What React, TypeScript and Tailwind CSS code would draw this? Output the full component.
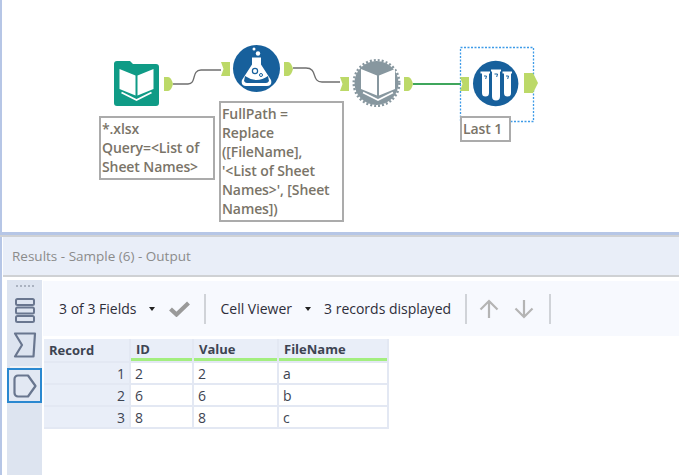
import React from 'react';

const rows = [
  { record: 1, id: '2', value: '2', fileName: 'a' },
  { record: 2, id: '6', value: '6', fileName: 'b' },
  { record: 3, id: '8', value: '8', fileName: 'c' },
];

const GREEN = '#bcd968';

function OutAnchor({ x, y, w = 9, h = 14 }: { x: number; y: number; w?: number; h?: number }) {
  return (
    <path
      d={`M${x} ${y}h${w * 0.45}q${w * 0.35} 0 ${w * 0.55} ${h / 2}q${-w * 0.2} ${h / 2} ${-w * 0.55} ${h / 2}h${-w * 0.45}z`}
      fill={GREEN}
    />
  );
}

function InAnchor({ x, y }: { x: number; y: number }) {
  return <path d={`M${x} ${y}h9v14h-9l2.5 -7z`} fill={GREEN} />;
}

function BookGlyph({ cx, cy }: { cx: number; cy: number }) {
  return (
    <g transform={`translate(${cx} ${cy})`} fill="none">
      <path d="M-1 -8.5 L-17 -15 V5 L-1 11.5z M1 -8.5 L17 -15 V5 L1 11.5z" fill="#fff" />
      <path d="M-15 8.5 L0 16 L15 8.5" stroke="#fff" strokeWidth="1.8" />
    </g>
  );
}

function Diagram() {
  return (
    <svg className="absolute left-0 top-0" width="679" height="232" viewBox="0 0 679 232">
      {/* wires */}
      <path d="M173 84H188C197 84 191 70 201 70H221" fill="none" stroke="#6f6f6f" strokeWidth="1.3" />
      <path d="M293 68H306C318 68 311 82 322 82H340" fill="none" stroke="#6f6f6f" strokeWidth="1.3" />
      <path d="M413 84H461" fill="none" stroke="#3fa65c" strokeWidth="2" />

      {/* input tool */}
      <path
        d="M114 64a3 3 0 0 1 3 -3H130l3 3H156a3 3 0 0 1 3 3V103a3 3 0 0 1 -3 3H117a3 3 0 0 1 -3 -3z"
        fill="#0f9b86"
      />
      <BookGlyph cx={136.5} cy={84} />
      <OutAnchor x={164} y={77} />

      {/* formula tool */}
      <InAnchor x={221} y={62} />
      <circle cx="256.5" cy="68.5" r="23.5" fill="#17609c" />
      <path d="M252 57.5h9v7l10 15.5q1.5 5.5 -4 6h-21q-5.5 -.5 -4 -6l10 -15.5z" fill="#fff" />
      <path d="M245 76q11.5 8 23 0l1 5q-1 2 -3 2h-19q-2 0 -3 -2z" fill="#17609c" />
      <circle cx="255" cy="71" r="2.6" fill="none" stroke="#17609c" strokeWidth="1.2" />
      <circle cx="261" cy="75" r="1.5" fill="none" stroke="#17609c" strokeWidth="1" />
      <circle cx="254" cy="49" r="1.5" fill="#fff" />
      <circle cx="258" cy="53.5" r="2.2" fill="#fff" />
      <OutAnchor x={284} y={62} />

      {/* dynamic input macro */}
      <InAnchor x={340} y={77} />
      <circle cx="376.5" cy="83" r="22" fill="#87979f" />
      <circle cx="376.5" cy="83" r="22.8" fill="none" stroke="#87979f" strokeWidth="2.4" strokeDasharray="2 2" />
      <BookGlyph cx={378} cy={84} />
      <OutAnchor x={404} y={77} />

      {/* sample tool */}
      <rect x="460.5" y="47.5" width="73" height="74" fill="none" stroke="#3e9be8" strokeWidth="1.3" strokeDasharray="2 1.5" />
      <InAnchor x={460} y={77} />
      <circle cx="495.7" cy="83.5" r="22.7" fill="#17609c" />
      <g fill="#fff">
        <path d="M480.5 71.5h9.5v2h-1v19.5a3.2 3.2 0 0 1 -7 0V73.5h-1.5z" />
        <path d="M491 69.5h10v2h-1v25a4 4 0 0 1 -8 0V71.5h-1z" />
        <path d="M502.5 71.5h9.5v2h-1v19.5a3.2 3.2 0 0 1 -7 0V73.5h-1.5z" />
      </g>
      <g stroke="#17609c" strokeWidth="1" fill="none">
        <path d="M484 76h2.5l-.8 3" />
        <path d="M494.5 74h3l-.8 3" />
        <path d="M506 76h2.5l-.8 3" />
      </g>
      <path d="M524 73h9l5 10l-5 10h-9z" fill={GREEN} />
    </svg>
  );
}

function Note({ className, children }: { className: string; children: React.ReactNode }) {
  return (
    <div
      className={`absolute border-2 border-[#ababab] bg-white px-[1px] pt-[1px] text-[14px] font-semibold leading-[19px] tracking-[-0.1px] whitespace-nowrap text-[#7a7468] ${className}`}
    >
      {children}
    </div>
  );
}

function Caret() {
  return <span className="h-0 w-0 border-x-[3.5px] border-t-[4px] border-x-transparent border-t-[#222]" />;
}

function Divider() {
  return <div className="h-[30px] w-[2px] bg-[#d0d3d8]" />;
}

function Sidebar() {
  return (
    <div className="flex w-[35px] shrink-0 flex-col items-center bg-[#dde4f0] pt-[5px]">
      <div className="flex gap-[2px]">
        {[0, 1, 2, 3, 4].map((i) => (
          <span key={i} className="h-[2px] w-[2px] bg-[#aab2c0]" />
        ))}
      </div>
      <svg className="mt-[11px]" width="22" height="25" viewBox="0 0 22 25" fill="none" stroke="#69768f" strokeWidth="2">
        <rect x="2" y="1" width="18" height="6" rx="1.5" />
        <rect x="2" y="9.5" width="18" height="6" rx="1.5" />
        <rect x="2" y="18" width="18" height="6" rx="1.5" />
      </svg>
      <svg className="mt-[9px]" width="24" height="26" viewBox="0 0 24 26" fill="none" stroke="#69768f" strokeWidth="2.2" strokeLinejoin="round">
        <path d="M2 1.5H22L20.5 24.5H2L9 13z" />
      </svg>
      <div className="mt-[8px] h-[2px] w-[30px] bg-[#f0f2f6]" />
      <div className="flex h-[35px] w-[35px] items-center justify-center border-2 border-[#2a88d0] bg-[#e2e8f3]">
        <svg width="24" height="24" viewBox="0 0 24 24" fill="none" stroke="#69768f" strokeWidth="2.2" strokeLinejoin="round">
          <path d="M5 1.5H15L22.5 12L15 22.5H5a3.5 3.5 0 0 1 -3.5 -3.5V5A3.5 3.5 0 0 1 5 1.5z" />
        </svg>
      </div>
    </div>
  );
}

function Toolbar() {
  return (
    <div className="flex h-[55px] items-center bg-[#f7f9fe] text-[14px] text-[#2e2e3a]">
      <span className="ml-[16px]">3 of 3 Fields</span>
      <span className="ml-[13px] flex"><Caret /></span>
      <svg className="ml-[14px]" width="21" height="16" viewBox="0 0 21 16" fill="none" stroke="#9a9a9a" strokeWidth="4.2">
        <path d="M1.5 8L7.5 13.5L19.5 2" />
      </svg>
      <div className="ml-[14px]"><Divider /></div>
      <span className="ml-[14px]">Cell Viewer</span>
      <span className="ml-[13px] flex"><Caret /></span>
      <span className="ml-[13px]">3 records displayed</span>
      <div className="ml-[14px]"><Divider /></div>
      <svg className="ml-[12px]" width="20" height="20" viewBox="0 0 20 20" fill="none" stroke="#b4b4b4" strokeWidth="2.2">
        <path d="M10 19V2M1.5 10.5L10 2L18.5 10.5" />
      </svg>
      <svg className="ml-[15px]" width="20" height="20" viewBox="0 0 20 20" fill="none" stroke="#b4b4b4" strokeWidth="2.2">
        <path d="M10 1V18M1.5 9.5L10 18L18.5 9.5" />
      </svg>
      <div className="ml-[15px]"><Divider /></div>
    </div>
  );
}

function ResultsTable() {
  return (
    <div className="mt-[3px] ml-[1px] grid w-[345px] grid-cols-[85px_61px_83px_108px] gap-[2px] border-r-2 border-b-2 border-[#e3e8f3] bg-[#e3e8f3] text-[14px] text-[#3d4452]">
      <div className="flex h-[22px] items-center bg-[#e9eef8] pt-[1px] pl-[5px] text-[13px] font-bold">Record</div>
      {['ID', 'Value', 'FileName'].map((name) => (
        <div
          key={name}
          className="flex h-[22px] items-center border-b-[3px] border-[#a3ee7f] bg-[#e9eef8] pt-[2px] pl-[5px] text-[13px] font-bold"
        >
          {name}
        </div>
      ))}
      {rows.map((row) => (
        <React.Fragment key={row.record}>
          <div className="flex h-[20px] items-center justify-end bg-[#e9eef8] pr-[4px]">{row.record}</div>
          <div className="flex h-[20px] items-center bg-white pl-[4px]">{row.id}</div>
          <div className="flex h-[20px] items-center bg-white pl-[4px]">{row.value}</div>
          <div className="flex h-[20px] items-center bg-white pl-[4px]">{row.fileName}</div>
        </React.Fragment>
      ))}
    </div>
  );
}

export default function App() {
  return (
    <div className="flex h-[475px] w-[679px] flex-col overflow-hidden bg-white font-['Open_Sans',sans-serif]">
      <div className="relative h-[232px] shrink-0 border-l-2 border-[#b6c6e6] bg-white">
        <div className="absolute -left-[2px] top-0">
          <Diagram />
        </div>
        <Note className="left-[97px] top-[116px] h-[64px] w-[116px]">
          *.xlsx
          <br />
          Query=&lt;List of
          <br />
          Sheet Names&gt;
        </Note>
        <Note className="left-[217px] top-[101px] h-[121px] w-[125px]">
          FullPath =
          <br />
          Replace
          <br />
          ([FileName],
          <br />
          '&lt;List of Sheet
          <br />
          Names&gt;', [Sheet
          <br />
          Names])
        </Note>
        <Note className="left-[458px] top-[116px] h-[26px] w-[51px]">Last 1</Note>
      </div>
      <div className="h-[3px] shrink-0 bg-[#b6c6e6]" />
      <div className="h-[2px] shrink-0 bg-[#cfd1d4]" />
      <div className="flex min-h-0 flex-1 flex-col border-l-2 border-[#b6c6e6]">
        <div className="ml-[1px] flex h-[40px] shrink-0 items-center border-b-2 border-[#cfd1d4] bg-[#e9eef8] pl-[9px] text-[13.5px] text-[#8b8b8b]">
          Results - Sample (6) - Output
        </div>
        <div className="flex min-h-0 flex-1 pt-[3px] pl-[5px]">
          <Sidebar />
          <div className="min-w-0 flex-1 pt-[1px] pl-[1px]">
            <Toolbar />
            <ResultsTable />
          </div>
        </div>
      </div>
    </div>
  );
}
